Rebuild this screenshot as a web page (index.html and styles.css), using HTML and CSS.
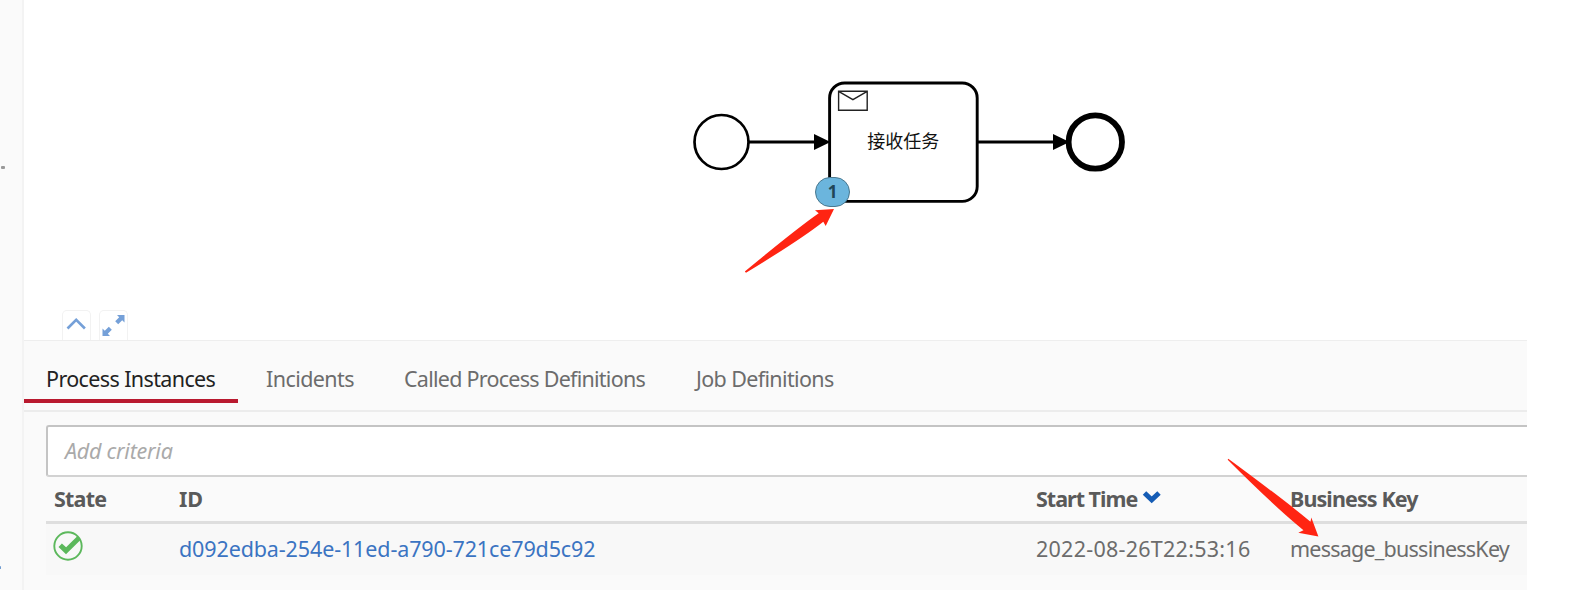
FILE: index.html
```html
<!DOCTYPE html>
<html lang="en">
<head>
<meta charset="utf-8">
<title>Process Instances</title>
<link rel="stylesheet" href="styles.css">
</head>
<body>
<div class="app">
  <aside class="sidebar"></aside>
  <main class="main">
    <section class="diagram">
      <svg class="canvas" width="1503" height="340" viewBox="24 0 1503 340">
        <g fill="none" stroke="#000">
          <circle cx="721.5" cy="142" r="27" stroke-width="2.7"/>
          <path d="M749 142H816M977 142H1055" stroke-width="2.8"/>
          <rect x="829.6" y="83" width="147.6" height="118.4" rx="15" stroke-width="2.9"/>
          <circle cx="1095.3" cy="142" r="26.7" stroke-width="5.8"/>
          <path d="M838.6 91.3h28.6v19h-28.6zl14.3 8.4 14.3-8.4" stroke="#222" stroke-width="1.4"/>
        </g>
        <path d="M814 134l16.500 8-16.500 8zM1053 134l16.500 8-16.500 8z"/>
        <text class="task-label" x="903.300" y="147.500" text-anchor="middle">接收任务</text>
      </svg>
      <span class="badge">1</span>
      <div class="controls">
        <button class="control"><svg width="27" height="28"><path d="M4.500 16.500l8.700-8.700 8.700 8.700" fill="none" stroke="#75a0d8" stroke-width="2.600"/></svg></button>
        <button class="control"><svg width="27" height="28"><path d="M17 3h7.500v7.500l-2.300-2.300-4 4-3-3 4-4zM2.500 24v-7.500l2.300 2.300 4-4 3 3-4 4L10 24z" fill="#75a0d8"/></svg></button>
      </div>
    </section>
    <nav class="tabs">
      <a class="tab active">Process Instances</a>
      <a class="tab incidents">Incidents</a>
      <a class="tab called">Called Process Definitions</a>
      <a class="tab jobs">Job Definitions</a>
    </nav>
    <section class="content">
      <div class="search">Add criteria</div>
      <div class="row head">
        <span class="h-state">State</span>
        <span>ID</span>
        <span class="h-time">Start Time<svg class="sort" width="20" height="14"><path d="M2.500 3l7.200 6.800L17 3" fill="none" stroke="#155cb5" stroke-width="5"/></svg></span>
        <span class="h-key">Business Key</span>
      </div>
      <div class="row item">
        <svg class="ok" width="30" height="30"><circle cx="15" cy="15" r="13.700" fill="none" stroke="#5cb85c" stroke-width="1.900"/><path d="M5.500 16l3.400-3.400 4.200 3.600L24.500 5l2.700 4.300-14.200 14z" fill="#5cb85c"/></svg>
        <a class="id">d092edba-254e-11ed-a790-721ce79d5c92</a>
        <span class="time">2022-08-26T22:53:16</span>
        <span class="key">message_bussinessKey</span>
      </div>
    </section>
  </main>
  <i class="mark mark-top"></i>
  <i class="mark mark-bottom"></i>
  <svg class="annotations" width="1570" height="590">
    <path fill="#ff2412" d="M834 209L815 210.300 818.700 213.200Q796 229 744.800 271.500L746 272.700Q800 240 823.300 221.700L825.700 226ZM1318.400 536.500L1311.300 517.500 1310.500 521.800Q1287 502 1228.300 458.700L1227.700 459.800Q1276 508 1303.500 530.200L1298.300 532.800Z"/>
  </svg>
</div>
</body>
</html>
```
FILE: styles.css
```css
* { box-sizing: border-box; }
body { margin: 0; background: #fff; font: 21.5px/30px "Noto Sans", "Noto Sans CJK SC", sans-serif; color: #6c6c6c; }
.app { position: relative; display: flex; width: 1570px; height: 590px; overflow: hidden; }
.sidebar { width: 24px; background: #fafafa; border-right: 2px solid #f3f3f3; }
.main { width: 1503px; background: #fafafa; }
.diagram { position: relative; height: 341px; background: #fff; border-bottom: 1px solid #eee; }
.canvas { display: block; }
.task-label { font: 18px "Noto Sans CJK SC", sans-serif; fill: #111; }
.badge { position: absolute; left: 791px; top: 177px; width: 35px; height: 30px; border: 1.5px solid #49788f; border-radius: 15px; background: #6bb5dd; color: #204658; font: bold 17px/27px "Noto Sans", sans-serif; text-align: center; }
.controls { position: absolute; left: 38px; bottom: 0; display: flex; gap: 8px; }
.control { width: 29px; height: 30px; padding: 0; border: 1px solid #f2f2f2; border-bottom: 0; border-radius: 5px 5px 0 0; background: #fff; }
.control svg { display: block; }
.tabs { display: flex; height: 71px; border-bottom: 2px solid #ececec; }
.tab { height: 62px; padding: 23px 0 0; white-space: nowrap; }
.active { width: 214px; padding-left: 22px; border-bottom: 4px solid #b9192f; color: #222; letter-spacing: -.62px; }
.incidents { width: 138px; padding-left: 28px; letter-spacing: -.57px; }
.called { width: 291px; padding-left: 28px; letter-spacing: -.74px; }
.jobs { padding-left: 29px; letter-spacing: -.64px; }
.content { padding: 13px 0 0 22px; }
.search { height: 52px; padding: 9px 0 0 17px; border: 2px solid #c4c4c4; border-bottom-color: #d2d2d2; border-right: 0; border-radius: 3px 0 0 3px; background: #fff; color: #aaa; font-style: italic; letter-spacing: -.25px; }
.row { display: grid; grid-template-columns: 133px 856px 255px 1fr; white-space: nowrap; }
.head { height: 47px; padding-top: 7px; border-bottom: 3px solid #dedede; font-weight: 700; color: #5a5a5a; }
.h-state { padding-left: 8px; letter-spacing: -.8px; }
.h-time { padding-left: 1px; letter-spacing: -1px; }
.h-key { letter-spacing: -.9px; }
.sort { margin-left: 5px; vertical-align: 3px; }
.item { height: 51px; padding-top: 10px; background: #f8f8f8; }
.ok { margin: -3px 0 0 7px; }
.id { color: #3b74c2; letter-spacing: -.12px; }
.time { padding-left: 1px; letter-spacing: .26px; }
.key { letter-spacing: -.77px; }
.mark { position: absolute; left: 1px; width: 4px; height: 3px; border-radius: 1px; background: #999; }
.mark-top { top: 166px; }
.mark-bottom { left: 0; top: 566px; width: 1px; background: #6f9bd0; }
.annotations { position: absolute; left: 0; top: 0; }
```
